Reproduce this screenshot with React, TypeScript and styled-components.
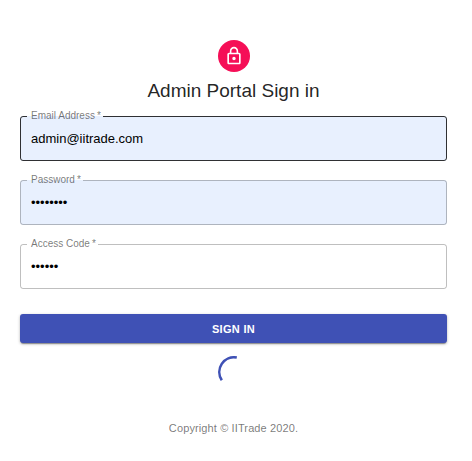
import React, { useId } from "react";
import styled, { createGlobalStyle } from "styled-components";

const GlobalStyle = createGlobalStyle`
  *, *::before, *::after { box-sizing: border-box; }
  body {
    margin: 0;
    background: #fff;
    color: rgba(0, 0, 0, 0.87);
    font-family: "Liberation Sans", Arial, sans-serif;
  }
`;

const Page = styled.main`
  display: flex;
  flex-direction: column;
  align-items: center;
  padding: 40px 25px 24px 20px;
`;

const Avatar = styled.div`
  display: flex;
  align-items: center;
  justify-content: center;
  width: 32px;
  height: 32px;
  margin-bottom: 6px;
  border-radius: 50%;
  background: #f50f57;
`;

const Title = styled.h1`
  margin: 0;
  font-size: 19px;
  line-height: 26px;
  font-weight: 400;
`;

const Form = styled.form`
  display: flex;
  flex-direction: column;
  gap: 19px;
  width: 100%;
  margin-top: 12px;
`;

const FieldBox = styled.div`
  position: relative;
`;

const FieldLabel = styled.label`
  position: absolute;
  top: -6px;
  left: 11px;
  font-size: 10px;
  line-height: 12px;
  color: rgba(0, 0, 0, 0.54);
  pointer-events: none;
`;

const FieldInput = styled.input<{ $filled?: boolean }>`
  display: block;
  width: 100%;
  height: 45px;
  padding: 0 11px;
  border: 0;
  border-radius: 3px;
  outline: none;
  background: ${(p) => (p.$filled ? "#e8f0fe" : "transparent")};
  color: #000;
  font-family: inherit;
  font-size: 13px;
`;

const Outline = styled.fieldset<{ $active?: boolean }>`
  position: absolute;
  inset: -6px 0 0;
  min-width: 0;
  margin: 0;
  padding: 0 6px;
  border: 1px solid ${(p) => (p.$active ? "rgba(0, 0, 0, 0.8)" : "rgba(0, 0, 0, 0.25)")};
  border-radius: 3px;
  pointer-events: none;
`;

const Notch = styled.legend`
  height: 12px;
  padding: 0 3px;
  font-size: 10px;
  line-height: 12px;

  span {
    visibility: hidden;
  }
`;

const SubmitButton = styled.button`
  width: 100%;
  height: 29px;
  margin-top: 6px;
  border: 0;
  border-radius: 3px;
  background: #3f51b5;
  box-shadow: 0 2px 1px -1px rgba(0, 0, 0, 0.3), 0 1px 3px rgba(0, 0, 0, 0.3);
  color: #fff;
  font-family: inherit;
  font-size: 11px;
  font-weight: 700;
  letter-spacing: 0.02857em;
  text-transform: uppercase;
  cursor: pointer;
`;

const Spinner = styled.svg`
  width: 32px;
  height: 32px;
  margin-top: 13px;
`;

const Footer = styled.footer`
  margin-top: 32px;
  font-size: 11px;
  line-height: 16px;
  letter-spacing: 0.01071em;
  color: rgba(0, 0, 0, 0.54);
`;

interface FieldProps {
  label: string;
  type: string;
  value: string;
  filled?: boolean;
  active?: boolean;
}

function Field({ label, type, value, filled, active }: FieldProps) {
  const id = useId();
  const caption = `${label}\u2009*`;
  return (
    <FieldBox>
      <FieldInput id={id} type={type} defaultValue={value} $filled={filled} required />
      <Outline $active={active} aria-hidden="true">
        <Notch>
          <span>{caption}</span>
        </Notch>
      </Outline>
      <FieldLabel htmlFor={id}>{caption}</FieldLabel>
    </FieldBox>
  );
}

export default function App() {
  return (
    <>
      <GlobalStyle />
      <Page>
        <Avatar>
          <svg width="20" height="20" viewBox="0 0 24 24" fill="#fff" aria-hidden="true">
            <path d="M12 17c1.1 0 2-.9 2-2s-.9-2-2-2-2 .9-2 2 .9 2 2 2zm6-9h-1V6c0-2.76-2.24-5-5-5S7 3.24 7 6v2H6c-1.1 0-2 .9-2 2v10c0 1.1.9 2 2 2h12c1.1 0 2-.9 2-2V10c0-1.1-.9-2-2-2zM8.9 6c0-1.71 1.39-3.1 3.1-3.1s3.1 1.39 3.1 3.1v2H8.9V6zM18 20H6V10h12v10z" />
          </svg>
        </Avatar>
        <Title>Admin Portal Sign in</Title>
        <Form onSubmit={(e) => e.preventDefault()}>
          <Field label="Email Address" type="email" value="admin@iitrade.com" filled active />
          <Field label="Password" type="password" value="password" filled />
          <Field label="Access Code" type="password" value="123456" />
          <SubmitButton type="submit">Sign In</SubmitButton>
        </Form>
        <Spinner viewBox="0 0 32 32" role="progressbar" aria-label="Signing in">
          <path
            d="M18.8 1.57A14.7 14.7 0 0 0 3.8 24.2"
            fill="none"
            stroke="#3f51b5"
            strokeWidth="2.6"
          />
        </Spinner>
        <Footer>Copyright © IITrade 2020.</Footer>
      </Page>
    </>
  );
}
